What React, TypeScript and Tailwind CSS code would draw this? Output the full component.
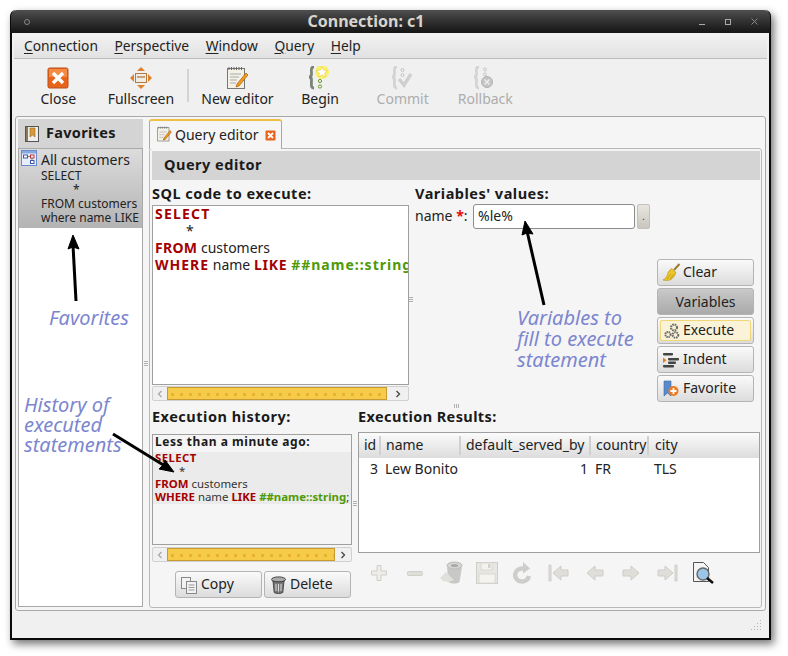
import React from "react";

const Close = () => (
  <svg width="22" height="22" viewBox="0 0 22 22"><rect x="1" y="1" width="20" height="20" rx="1.5" fill="#e8641b" stroke="#b9501a"/><rect x="2" y="2" width="18" height="8" fill="#f58a44"/><path d="M6 6l10 10M16 6L6 16" stroke="#fff" strokeWidth="3.4"/></svg>
);
const Fullscreen = () => (
  <svg width="22" height="22" viewBox="0 0 22 22"><path d="M11 0l4 4H7zM11 22l-4-4h8zM0 11l4-4v8zM22 11l-4 4V7z" fill="#e0812a"/><rect x="5.5" y="6.5" width="11" height="9" fill="#f0ece4" stroke="#b5793f"/><rect x="7" y="9" width="8" height="2" fill="#c9a377"/></svg>
);
const NewEditor = () => (
  <svg width="24" height="24" viewBox="0 0 24 24"><rect x="2.5" y="2.5" width="17" height="20" fill="#f3f1e6" stroke="#777"/><path d="M4 1v3M6.5 1v3M9 1v3M11.5 1v3M14 1v3M16.5 1v3" stroke="#666"/><path d="M5 8h11M5 11h9M5 14h7M5 17h6" stroke="#aaa"/><path d="M12 18l-1 3 3-1L23 9l-2-2z" fill="#f09c1c" stroke="#a85a0c" strokeWidth=".7"/></svg>
);
const Brace = ({ c }: { c: string }) => (
  <path d="M7 1C3.5 1 4.5 4 4.5 8c0 2-1 3-2.5 3 1.5 0 2.5 1 2.5 3 0 4-1 8 2.500 8" fill="none" stroke={c} strokeWidth="2.8" />
);
const Begin = () => (
  <svg width="26" height="24" viewBox="0 0 26 24"><Brace c="#7a8478"/><circle cx="13" cy="15" r="1.6" fill="none" stroke="#6a9a2a"/><circle cx="13" cy="20.500" r="1.6" fill="none" stroke="#6a9a2a"/><circle cx="15" cy="6" r="7" fill="#f8f070"/><path d="M15 .5l1.7 3.6 3.8.4-2.8 2.7.8 3.8-3.5-2-3.500 2 .8-3.8-2.8-2.7 3.8-.4z" fill="#fff" stroke="#ecd02c" strokeWidth=".7"/></svg>
);
const Commit = () => (
  <svg width="26" height="24" viewBox="0 0 26 24"><Brace c="#d4d4d4"/><circle cx="12.500" cy="4" r="1.5" fill="none" stroke="#c4c4c4"/><circle cx="12.500" cy="9" r="1.5" fill="none" stroke="#c4c4c4"/><path d="M9 13l5 6 7-11" fill="none" stroke="#cfcfcf" strokeWidth="3.4"/></svg>
);
const Rollback = () => (
  <svg width="26" height="24" viewBox="0 0 26 24"><Brace c="#d4d4d4"/><circle cx="13" cy="3.500" r="1.5" fill="none" stroke="#c4c4c4"/><circle cx="13" cy="8.500" r="1.5" fill="none" stroke="#c4c4c4"/><circle cx="15" cy="16" r="5.5" fill="#c4c4c4" stroke="#b4b4b4"/><path d="M12.500 13.500l5 5M17.500 13.500l-5 5" stroke="#f0f0f0" strokeWidth="1.2"/></svg>
);

const ToolBtn = ({ icon, label, off }: { icon: React.ReactNode; label: string; off?: boolean }) => (
  <div className={`w-[82.6px] flex flex-col items-center ${off ? "text-[#adadad]" : "text-[#222]"}`}>
    <div className="h-[24px] flex items-center justify-center">{icon}</div>
    <div className="h-[17px] leading-[17px]">{label}</div>
  </div>
);

const U = ({ c, r }: { c: string; r: string }) => (
  <span><span className="underline underline-offset-2">{c}</span>{r}</span>
);

const Scroll = ({ thumb, right, w }: { thumb: number; right: number; w: string }) => (
  <div className={`${w} h-[15px] flex border border-[#d0d0d0] rounded-[2px] bg-[#f0f0f0]`}>
    <div className="w-[14px] flex items-center justify-center">
      <svg width="6" height="8" viewBox="0 0 6 8"><path d="M4.5 1L1.5 4l3 3" fill="none" stroke="#aaa" strokeWidth="1.3"/></svg>
    </div>
    <div
      className="h-full border border-[#c99a2e] bg-[#f6cb4a] bg-[radial-gradient(circle,#e9b22c_1.6px,transparent_2px)] bg-[length:9px_13px]"
      style={{ width: thumb }}
    />
    <div className="flex-1" />
    <div className="flex items-center justify-center" style={{ width: right }}>
      <svg width="6" height="8" viewBox="0 0 6 8"><path d="M1.5 1l3 3-3 3" fill="none" stroke="#444" strokeWidth="1.3"/></svg>
    </div>
  </div>
);

const Btn = ({ icon, label, state, w = "w-[97px]" }: { icon?: React.ReactNode; label: string; state?: string; w?: string }) => (
  <div
    className={`${w} h-[27px] shrink-0 rounded-[3px] border border-[#b4b4b4] flex items-center text-[#222] ${
      state === "on" ? "bg-gradient-to-b from-[#c9c9c9] to-[#aaaaaa] justify-center" : "bg-gradient-to-b from-[#fafafa] to-[#dcdcdc]"
    } ${state === "focus" ? "p-[2px]" : ""}`}
  >
    {state === "focus" ? (
      <div className="w-full h-full border border-[#f2d778] bg-[#fbf3d8] rounded-[2px] flex items-center">
        <div className="w-[21px] flex justify-center mr-[1px]">{icon}</div>
        <span className="pb-[2px]">{label}</span>
      </div>
    ) : state === "on" ? (
      <span>{label}</span>
    ) : (
      <>
        <div className="w-[24px] ml-[1px] flex justify-center">{icon}</div>
        <span className="pb-[2px]">{label}</span>
      </>
    )}
  </div>
);

const Kw = ({ children, t = "" }: { children: React.ReactNode; t?: string }) => <span className={`font-bold text-[#a40000] ${t}`}>{children}</span>;
const Gr = ({ children, t = "" }: { children: React.ReactNode; t?: string }) => <span className={`font-bold text-[#4e9a06] ${t}`}>{children}</span>;

const Gray = ({ children }: { children: React.ReactNode }) => (
  <div className="w-[27px] h-[26px] flex items-center justify-center">{children}</div>
);

const Arr = ({ d }: { d: string }) => (
  <svg width="24" height="18" viewBox="0 0 24 18"><path d={d} fill="#e0ded9" stroke="#cfcdc8"/></svg>
);

const VGrip = () => (
  <>
    <div className="w-[4px] h-[1px] bg-[#b0b0b0]" />
    <div className="w-[4px] h-[1px] bg-[#b0b0b0]" />
    <div className="w-[4px] h-[1px] bg-[#b0b0b0]" />
  </>
);

export default function App() {
  return (
    <div className="relative w-[788px] h-[656px] bg-white overflow-hidden font-['DejaVu_Sans',sans-serif] text-[14px]">
      <div className="ml-[10px] mt-[10px] w-[761px] h-[630px] rounded-t-[6px] border-x-2 border-b-2 border-[#0a0a0a] bg-[#f0f0f0] flex flex-col shadow-[3px_4px_8px_rgba(0,0,0,0.55)]">
        {/* title bar */}
        <div className="h-[23px] -mx-[1px] rounded-t-[6px] bg-gradient-to-b from-[#4f4f4f] to-[#151515] flex items-center text-[#d8d4cc] shrink-0">
          <div className="w-[6px] h-[6px] ml-[13px] rounded-full border border-[#888]" />
          <div className="flex-1 text-center font-bold text-[16px] pl-[3px] -mt-[2px]">Connection: c1</div>
          <div className="flex items-center gap-[20px] mr-[12px] text-[#999]">
            <div className="w-[6px] h-[1px] bg-[#aaa] mt-[6px]" />
            <div className="w-[6px] h-[6px] border border-[#aaa]" />
            <svg width="7" height="7" viewBox="0 0 7 7"><path d="M.5.5l6 6M6.5.5l-6 6" stroke="#8a8a8a"/></svg>
          </div>
        </div>
        {/* menu */}
        <div className="h-[26px] mx-[2px] pt-[1px] shrink-0 bg-gradient-to-b from-[#f2f2f2] to-[#e2e2e2] border-b border-[#bdbdbd] flex items-center gap-[16.5px] pl-[10px] text-[#222] text-[13.8px]">
          <U c="C" r="onnection" />
          <U c="P" r="erspective" />
          <U c="W" r="indow" />
          <U c="Q" r="uery" />
          <U c="H" r="elp" />
        </div>
        {/* toolbar */}
        <div className="h-[57px] shrink-0 flex items-start pl-[5px] pt-[7px]">
          <ToolBtn icon={<Close />} label="Close" />
          <ToolBtn icon={<Fullscreen />} label="Fullscreen" />
          <div className="w-[2px] h-[33px] mt-[3px] bg-[#d4d4d4] ml-[5px] mr-[7px]" />
          <ToolBtn icon={<NewEditor />} label="New editor" />
          <ToolBtn icon={<Begin />} label="Begin" />
          <ToolBtn icon={<Commit />} label="Commit" off />
          <ToolBtn icon={<Rollback />} label="Rollback" off />
        </div>
        {/* body frame */}
        <div className="h-[495px] shrink-0 mx-[3px] flex rounded-[3px] border border-[#a8a8a8] bg-[#f5f5f5]">
          {/* left dock */}
          <div className="w-[127px] shrink-0 pl-[2px] pt-[2px] pb-[3px] flex flex-col">
            <div className="h-[29px] pb-[2px] bg-[#d4d4d4] flex items-center pl-[7px] font-bold text-[14.5px] tracking-[0.3px] text-[#1a1a1a] shrink-0">
              <svg width="14" height="16" viewBox="0 0 14 16" className="mr-[7px] mt-[2px]"><rect x=".5" y=".5" width="13" height="15" fill="#8a7a5a" stroke="#555"/><rect x="3" y="1" width="10" height="14" fill="#eee"/><path d="M5 2h5v9l-2.5-2L5 11z" fill="#d89a3a" stroke="#9a6a20" strokeWidth=".6"/></svg>
              Favorites
            </div>
            <div className="flex-1 border border-[#a8a8a8] bg-white overflow-hidden">
              <div className="h-[79px] bg-gradient-to-b from-[#dcdcdc] to-[#b4b4b4] pt-[2px] relative text-[#222]">
                <svg width="16" height="16" viewBox="0 0 16 16" className="absolute left-[2px] top-[1px]"><rect x=".5" y=".5" width="15" height="15" fill="#e8eefa" stroke="#6a8ad0"/><rect x="1" y="1" width="14" height="2.5" fill="#8aa8e0"/><rect x="2.5" y="5" width="4" height="3" fill="#fff" stroke="#3a5ab0"/><rect x="9.5" y="5" width="3.5" height="3" fill="#fff" stroke="#c03030"/><rect x="9.5" y="10.5" width="3.5" height="3" fill="#fff" stroke="#3a5ab0"/><path d="M6.5 6.5h3M11 8v2.5" stroke="#555" strokeWidth=".7"/></svg>
                <div className="ml-[22px] h-[18px] leading-[17px] whitespace-nowrap">All customers</div>
                <div className="ml-[22px] text-[12px] leading-[14px] whitespace-nowrap">
                  <div>SELECT</div>
                  <div className="pl-[32px]">*</div>
                  <div>FROM customers</div>
                  <div>where name LIKE</div>
                </div>
              </div>
            </div>
          </div>
          {/* splitter */}
          <div className="w-[6px] shrink-0 flex flex-col items-center justify-center gap-[1px]"><VGrip /></div>
          {/* right dock */}
          <div className="w-[613px] shrink-0 pt-[2px] flex flex-col">
            <div className="h-[30px] shrink-0 flex relative z-10">
              <div className="w-[133px] h-[30px] pb-[2px] bg-[#f5f5f5] border border-[#a8a8a8] border-b-0 border-t-2 border-t-[#f0c040] rounded-t-[3px] flex items-center pl-[6px] text-[#222]">
                <svg width="16" height="16" viewBox="0 0 24 24" className="mr-[3px]"><rect x="2.5" y="2.5" width="17" height="20" fill="#f3f1e6" stroke="#777"/><path d="M4 1v3M7 1v3M10 1v3M13 1v3M16 1v3" stroke="#666"/><path d="M5 9h11M5 13h8M5 17h6" stroke="#aaa"/><path d="M12 18l-1 3 3-1L23 9l-2-2z" fill="#f09c1c" stroke="#a85a0c"/></svg>
                Query editor
                <svg width="11" height="11" viewBox="0 0 22 22" className="ml-[7px] mt-[2px]"><rect x="1" y="1" width="20" height="20" rx="2" fill="#e8641b"/><path d="M6 6l10 10M16 6L6 16" stroke="#fff" strokeWidth="3.6"/></svg>
              </div>
            </div>
            <div className="h-[460px] -mt-[1px] border border-[#b8b8b8] rounded-[3px] pl-[2px] pt-[2px] pr-[1px] flex flex-col">
              <div className="h-[29px] pb-[2px] bg-[#d4d4d4] shrink-0 flex items-center pl-[12px] font-bold text-[14.5px] tracking-[0.5px] text-[#1a1a1a]">Query editor</div>
              {/* upper */}
              <div className="flex h-[221px] shrink-0">
                <div className="w-[257px] shrink-0">
                  <div className="font-bold text-[14.5px] tracking-[0.5px] text-[#1a1a1a] h-[25px] pt-[4px] leading-[19px] whitespace-nowrap">SQL code to execute:</div>
                  <div className="h-[180px] border border-[#a0a0a0] bg-white pl-[2px] leading-[17px] text-[#222] overflow-hidden whitespace-nowrap">
                    <div className="-mt-[1px]"><Kw t="tracking-[1.2px]">SELECT</Kw></div>
                    <div className="pl-[31px]">*</div>
                    <div><Kw t="tracking-[0.3px]">FROM</Kw> customers</div>
                    <div><Kw t="tracking-[1px]">WHERE</Kw> name <Kw t="tracking-[0.8px]">LIKE</Kw> <Gr t="tracking-[1px]">##name::string</Gr></div>
                  </div>
                  <div className="mt-[1px]"><Scroll thumb={220} right={21} w="w-[257px]" /></div>
                </div>
                <div className="w-[6px] shrink-0 flex flex-col justify-center items-center gap-[1px] pt-[18px] pr-[2px]"><VGrip /></div>
                <div className="flex-1">
                  <div className="font-bold text-[14.5px] tracking-[0.5px] text-[#1a1a1a] h-[24px] pt-[4px] leading-[19px] whitespace-nowrap">Variables' values:</div>
                  <div className="flex items-center h-[25px] text-[#222]">
                    <div className="w-[58px] pb-[2px]">name <span className="text-[#e01010] font-bold">*</span>:</div>
                    <div className="w-[162px] h-[25px] border border-[#8c8c8c] rounded-[3px] bg-white pl-[4px] leading-[21px]">%le%</div>
                    <div className="w-[13px] h-[25px] ml-[2px] border border-[#c4c0b8] rounded-[2px] bg-gradient-to-b from-[#e8e6e0] to-[#c8c6be] text-[9px] text-center leading-[23px]">.</div>
                  </div>
                  <div className="flex flex-col items-end gap-[2px] pr-[6px] mt-[30px]">
                    <Btn label="Clear" icon={
                      <svg width="19" height="19" viewBox="0 0 19 19"><path d="M17.500 1L12 7" stroke="#a07c28" strokeWidth="2"/><path d="M9.500 5.500L14 9.500c-1 3-3 6-6 7.500-2.500.5-5 .5-7 0 2-1 4-3 4.500-5.500C6 9 7.500 7 9.500 5.500z" fill="#ecc42c" stroke="#b8961c" strokeWidth=".7"/><path d="M5 16l4-5M8.500 16l3-4.500" stroke="#b8960c" strokeWidth=".7"/></svg>
                    } />
                    <Btn label="Variables" state="on" />
                    <Btn label="Execute" state="focus" icon={
                      <svg width="18" height="18" viewBox="0 0 18 18" fill="none" stroke="#6a6a6a"><circle cx="11" cy="5.500" r="3" strokeWidth="2.2" strokeDasharray="1.6 .8"/><circle cx="5" cy="12.500" r="2.6" strokeWidth="2" strokeDasharray="1.4 .7"/><circle cx="12.500" cy="13" r="2.8" strokeWidth="2" strokeDasharray="1.5 .8"/></svg>
                    } />
                    <Btn label="Indent" icon={
                      <svg width="18" height="16" viewBox="0 0 18 16"><rect x="1" y="1" width="10" height="2.4" rx=".8" fill="#444"/><rect x="6" y="6" width="11" height="2.4" rx=".8" fill="#444"/><rect x="6" y="9.5" width="8" height="2.4" rx=".8" fill="#444"/><rect x="1" y="13" width="11" height="2.4" rx=".8" fill="#444"/><path d="M1 5.500l3.500 2.700L1 11z" fill="#e87a10"/></svg>
                    } />
                    <Btn label="Favorite" icon={
                      <svg width="18" height="18" viewBox="0 0 18 18"><path d="M2 1h7v15l-3.500-3L2 16z" fill="#5a8ac8" stroke="#3a6aa8" strokeWidth=".6"/><circle cx="11.500" cy="11" r="5" fill="#ee7a22"/><path d="M11.500 8v6M8.500 11h6" stroke="#fff" strokeWidth="1.8"/></svg>
                    } />
                  </div>
                </div>
              </div>
              {/* horizontal splitter */}
              <div className="h-[4px] shrink-0 flex justify-center gap-[1px] mt-[3px]">
                <div className="w-[1px] h-[4px] bg-[#b0b0b0]" /><div className="w-[1px] h-[4px] bg-[#b0b0b0]" /><div className="w-[1px] h-[4px] bg-[#b0b0b0]" />
              </div>
              {/* lower */}
              <div className="flex">
                <div className="w-[200px] shrink-0">
                  <div className="font-bold text-[14.5px] tracking-[0.5px] text-[#1a1a1a] h-[26px] leading-[17px] whitespace-nowrap">Execution history:</div>
                  <div className="h-[111px] border border-[#a0a0a0] bg-[#f5f5f5] overflow-hidden whitespace-nowrap text-[11.4px] text-[#333] px-[2px]">
                    <div className="font-bold text-[12px] tracking-[0.55px] text-[#1a1a1a] h-[17px] leading-[13px]">Less than a minute ago:</div>
                    <div className="h-[52px] -mx-[2px] px-[2px] bg-[#ebebeb] leading-[13px] flow-root">
                      <div className="-mt-[1px]"><Kw t="tracking-[0.4px]">SELECT</Kw></div>
                      <div className="pl-[24px]">*</div>
                      <div><Kw>FROM</Kw> customers</div>
                      <div><Kw>WHERE</Kw> name <Kw>LIKE</Kw> <Gr>##name::string</Gr>;</div>
                    </div>
                  </div>
                  <div className="mt-[2px]"><Scroll thumb={168} right={16} w="w-[200px]" /></div>
                  <div className="flex gap-[2px] mt-[9px] ml-[23px]">
                    <Btn label="Copy" w="w-[87px]" icon={
                      <svg width="18" height="18" viewBox="0 0 18 18" fill="#f2f2f2" stroke="#888"><rect x="1.5" y="1.5" width="9" height="11"/><rect x="6.5" y="5.5" width="10" height="12"/><path d="M8.500 9h6M8.500 11.500h6M8.500 14h6" stroke="#999"/></svg>
                    } />
                    <Btn label="Delete" w="w-[87px]" icon={
                      <svg width="17" height="18" viewBox="0 0 17 18"><ellipse cx="8.5" cy="3.5" rx="7" ry="2.6" fill="#aaa" stroke="#444"/><path d="M3 5l1.200 11.500c2 1.400 6.600 1.400 8.600 0L14 5c-2 1.200-9 1.200-11 0z" fill="#777" stroke="#333" strokeWidth=".8"/><path d="M6 8v7M8.500 8v7.500M11 8v7" stroke="#ddd"/></svg>
                    } />
                  </div>
                </div>
                <div className="w-[6px] shrink-0 flex flex-col justify-center items-center gap-[1px]"><VGrip /></div>
                <div className="w-[402px] shrink-0">
                  <div className="font-bold text-[14.5px] tracking-[0.4px] text-[#1a1a1a] h-[24px] leading-[17px] whitespace-nowrap">Execution Results:</div>
                  <div className="h-[121px] border border-[#a0a0a0] bg-white text-[#222]">
                    <div className="h-[25px] bg-gradient-to-b from-[#fbfbfb] to-[#dcdcdc] flex items-center whitespace-nowrap">
                      <div className="w-[22px] h-[19px] pl-[5px] leading-[17px] border-r-2 border-[#d0d0d0]">id</div>
                      <div className="w-[80px] h-[19px] pl-[5px] leading-[17px] border-r-2 border-[#d0d0d0]">name</div>
                      <div className="w-[130px] h-[19px] pl-[5px] leading-[17px] border-r-2 border-[#d0d0d0]">default_served_by</div>
                      <div className="w-[58px] h-[19px] pl-[5px] leading-[17px] border-r-2 border-[#d0d0d0]">country</div>
                      <div className="pl-[6px] h-[19px] leading-[17px]">city</div>
                    </div>
                    <div className="flex h-[22px] pb-[2px] items-center whitespace-nowrap">
                      <div className="w-[19px] text-right">3</div>
                      <div className="w-[201px] pl-[7px] shrink-0">Lew Bonito</div>
                      <div className="w-[9px] text-right">1</div>
                      <div className="w-[66px] pl-[7px] shrink-0">FR</div>
                      <div>TLS</div>
                    </div>
                  </div>
                  <div className="flex items-center h-[26px] mt-[7px] ml-[7px] gap-[9px]">
                    <Gray><svg width="16" height="16" viewBox="0 0 16 16"><path d="M6 .5h4v5.500h5.500v4H10v5.500H6V10H.5V6H6z" fill="#efedea" stroke="#d0cec8"/></svg></Gray>
                    <Gray><svg width="16" height="5" viewBox="0 0 16 5"><rect x=".5" y=".5" width="15" height="4" rx="1" fill="#e0ded9" stroke="#d0cec8"/></svg></Gray>
                    <Gray><svg width="24" height="24" viewBox="0 0 24 24"><path d="M8 6l1.500 15c3 2 8 2 11 0L23 6c-3 2-12 2-15 0z" fill="#c8c8c6"/><ellipse cx="15.500" cy="4.500" rx="7.500" ry="3.500" fill="#d4d4d2" stroke="#bbb"/><ellipse cx="15.500" cy="4.500" rx="3.500" ry="1.500" fill="#aaa"/><path d="M1 17l6-6 2 2 6 6-5 2c-2 0-3-1-4-1l-1 1z" fill="#dfdfdc"/></svg></Gray>
                    <Gray><svg width="22" height="22" viewBox="0 0 22 22"><rect x=".5" y=".5" width="21" height="21" fill="#e8e6e2" stroke="#d0cec8"/><rect x="5" y="1" width="11" height="7" fill="#f4f2ee" stroke="#dad8d2"/><rect x="12" y="2" width="2.500" height="4" fill="#d4d2cc"/><rect x="3" y="12" width="16" height="9" fill="#f6f4f0" stroke="#dad8d2"/></svg></Gray>
                    <Gray><svg width="20" height="22" viewBox="0 0 20 22"><path d="M16 14a7 6.500 0 1 1-6-7.500" fill="none" stroke="#cdcdcb" strokeWidth="4.4"/><path d="M10 0l7 6.500-7 5z" fill="#cdcdcb"/></svg></Gray>
                    <Gray><Arr d="M2 1h2v16H2zM6 9l8-7v4h7v6h-7v4z" /></Gray>
                    <Gray><Arr d="M4 9l8-7v4h8v6h-8v4z" /></Gray>
                    <Gray><Arr d="M20 9l-8-7v4H4v6h8v4z" /></Gray>
                    <Gray><Arr d="M22 1h-2v16h2zM18 9l-8-7v4H3v6h7v4z" /></Gray>
                    <Gray><svg width="24" height="24" viewBox="0 0 24 24"><path d="M2.500 1.500h10l5 5v14h-15z" fill="#f4f4f4" stroke="#555"/><circle cx="12" cy="13" r="6" fill="#9cc6e8" stroke="#666" strokeWidth="1.4"/><path d="M16 17l6 5" stroke="#111" strokeWidth="2.6"/></svg></Gray>
                  </div>
                </div>
              </div>
            </div>
          </div>
        </div>
        {/* status bar */}
        <div className="flex-1 mx-[2px] flex items-end justify-end pr-[5px] pb-[7px]">
          <svg width="11" height="11" viewBox="0 0 11 11" fill="#b4b4b4"><rect x="9" y="0" width="1" height="1"/><rect x="6" y="3" width="1" height="1"/><rect x="9" y="3" width="1" height="1"/><rect x="3" y="6" width="1" height="1"/><rect x="6" y="6" width="1" height="1"/><rect x="9" y="6" width="1" height="1"/><rect x="0" y="9" width="1" height="1"/><rect x="3" y="9" width="1" height="1"/><rect x="6" y="9" width="1" height="1"/><rect x="9" y="9" width="1" height="1"/></svg>
        </div>
      </div>

      {/* annotations over the window */}
      <svg width="788" height="656" viewBox="0 0 788 656" className="absolute left-0 top-0 pointer-events-none">
        <path d="M76 301L73 245" stroke="#000" strokeWidth="3"/>
        <path d="M73 235l-5 14 5-2 6 2z" fill="#000" stroke="#000"/>
        <path d="M544 305L527 231" stroke="#000" strokeWidth="3"/>
        <path d="M525 221l-3 14 5-2 6 1z" fill="#000" stroke="#000"/>
        <path d="M113 434L165 466" stroke="#000" strokeWidth="3"/>
        <path d="M174 472l-9-12-2 5-4 4z" fill="#000" stroke="#000"/>
      </svg>
      <div className="absolute left-[49px] top-[306px] text-[20px] italic leading-[23px] text-[#7c86cf]">Favorites</div>
      <div className="absolute left-[517px] top-[307px] text-[20px] italic leading-[21px] text-[#7c86cf]">Variables to<br/>fill to execute<br/>statement</div>
      <div className="absolute left-[24px] top-[395px] text-[20px] italic leading-[20px] text-[#7c86cf]">History of<br/>executed<br/>statements</div>
    </div>
  );
}
